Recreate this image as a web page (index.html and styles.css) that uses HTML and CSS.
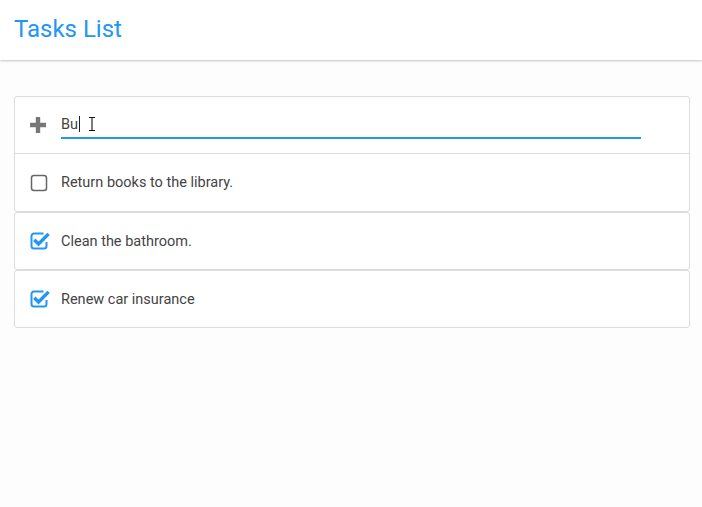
FILE: index.html
```html
<!DOCTYPE html>
<html>
<head>
<meta charset="utf-8">
<link rel="stylesheet" href="styles.css">
</head>
<body>
<header class="topbar"><h1 class="title">Tasks List</h1></header>
<main class="content">
  <div class="card">
    <div class="row">
      <svg class="icon" width="20" height="18" viewBox="0 0 20 18"><path d="M5.8 1h4.4v5.8H16v4.4h-5.8V17H5.8v-5.8H0V6.8h5.8z" fill="#777"/></svg>
      <div class="input-wrap">
        <span class="input-text">Bu</span><span class="caret"></span>
        <svg class="ibeam" width="8" height="16" viewBox="0 0 8 16"><path d="M1 1.5h2.2M4.8 1.5H7M4 2v12M1 14.5h2.2M4.8 14.5H7M3.2 1.5c.5 0 .8.3.8.6M4.8 1.5c-.5 0-.8.3-.8.6M3.2 14.5c.5 0 .8-.3.8-.6M4.8 14.5c-.5 0-.8-.3-.8-.6" stroke="#111" stroke-width="1.1" fill="none"/></svg>
      </div>
    </div>
    <div class="row divided">
      <svg class="icon" width="20" height="18" viewBox="0 0 20 18"><rect x="1.5" y="1.5" width="15" height="15" rx="2.5" fill="none" stroke="#666" stroke-width="1.5"/></svg>
      <span class="label">Return books to the library.</span>
    </div>
  </div>
  <div class="card">
    <div class="row">
      <svg class="icon" width="20" height="18" viewBox="0 0 20 18"><path d="M13.5 1.5H4A2.5 2.5 0 0 0 1.5 4v10A2.5 2.5 0 0 0 4 16.5h10a2.5 2.5 0 0 0 2.5-2.5V10" fill="none" stroke="#2196F3" stroke-width="2"/><path d="M4.3 7.8l4.2 4.2L18.6 1.9" fill="none" stroke="#2196F3" stroke-width="3.4"/></svg>
      <span class="label">Clean the bathroom.</span>
    </div>
  </div>
  <div class="card">
    <div class="row">
      <svg class="icon" width="20" height="18" viewBox="0 0 20 18"><path d="M13.5 1.5H4A2.5 2.5 0 0 0 1.5 4v10A2.5 2.5 0 0 0 4 16.5h10a2.5 2.5 0 0 0 2.5-2.5V10" fill="none" stroke="#2196F3" stroke-width="2"/><path d="M4.3 7.8l4.2 4.2L18.6 1.9" fill="none" stroke="#2196F3" stroke-width="3.4"/></svg>
      <span class="label">Renew car insurance</span>
    </div>
  </div>
</main>
</body>
</html>
```

FILE: styles.css
```css
html, body {
  margin: 0;
  padding: 0;
  background: #fdfdfd;
  font-family: Roboto, "Liberation Sans", sans-serif;
}
.topbar {
  height: 60px;
  background: #fff;
  box-shadow: 0 1px 2px rgba(0,0,0,0.22);
  display: flex;
  align-items: center;
  padding-left: 14px;
}
.title {
  margin: 0;
  font-size: 24px;
  font-weight: 400;
  color: #2196F3;
  position: relative;
  top: -1px;
}
.content {
  padding: 36px 12px 0 14px;
}
.card {
  background: #fff;
  border: 1px solid #dcdcdc;
  border-radius: 3px;
}
.row {
  height: 56px;
  display: flex;
  align-items: center;
  padding-left: 15px;
}
.row.divided {
  border-top: 1px solid #dcdcdc;
  height: 57px;
}
.icon {
  flex: none;
  margin-right: 11px;
}
.label {
  font-size: 14.5px;
  color: #444;
}
.input-wrap {
  position: relative;
  width: 580px;
  height: 25px;
  border-bottom: 2px solid #2196F3;
  display: flex;
  align-items: center;
  margin-top: 0;
}
.input-text {
  font-size: 14.5px;
  color: #444;
}
.caret {
  display: inline-block;
  width: 1px;
  height: 16px;
  background: #222;
  margin-left: 1px;
}
.ibeam {
  position: absolute;
  left: 27px;
  top: 4px;
}
```
